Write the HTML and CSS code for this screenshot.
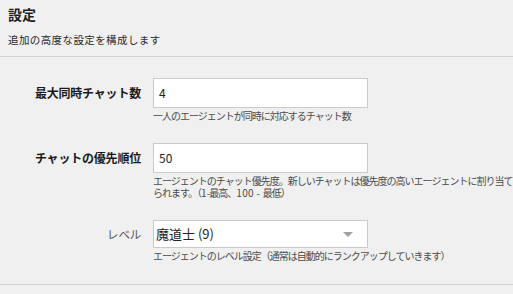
FILE: index.html
```html
<!DOCTYPE html>
<html lang="ja">
<head>
<meta charset="utf-8">
<link rel="stylesheet" href="styles.css">
</head>
<body>
<div class="header">
  <div class="title">設定</div>
  <div class="subtitle">追加の高度な設定を構成します</div>
</div>
<div class="form">
  <div class="row">
    <label class="label strong">最大同時チャット数</label>
    <div class="control"><div class="input">4</div></div>
    <div></div>
    <div class="hint">一人のエージェントが同時に対応するチャット数</div>
  </div>
  <div class="row">
    <label class="label strong">チャットの優先順位</label>
    <div class="control"><div class="input">50</div></div>
    <div></div>
    <div class="hint">エージェントのチャット優先度。新しいチャットは優先度の高いエージェントに割り当てられます。（<span class="num">1</span>-最高、<span class="num">100 - </span>最低）</div>
  </div>
  <div class="row">
    <label class="label light">レベル</label>
    <div class="control"><div class="select"><span>魔道士 (9)</span><span class="arrow"></span></div></div>
    <div></div>
    <div class="hint">エージェントのレベル設定（通常は自動的にランクアップしていきます）</div>
  </div>
</div>
</body>
</html>
```
FILE: styles.css
```css
html, body {
  margin: 0;
  padding: 0;
  background: #f0f0f0;
  font-family: "Noto Sans CJK JP", "Noto Sans", sans-serif;
  color: #222;
}
.header {
  padding: 6px 8px 0 8px;
  height: 50px;
  border-bottom: 1px solid #d2d2d2;
}
.title {
  font-size: 14px;
  font-weight: bold;
  line-height: 16px;
  color: #1e1e1e;
}
.subtitle {
  margin-top: 11px;
  font-size: 10.5px;
  line-height: 14px;
  color: #2a2a2a;
  letter-spacing: 0.4px;
}
.form {
  padding: 21px 0 22px 0;
  border-bottom: 1px solid #d2d2d2;
  display: flex;
  flex-direction: column;
  gap: 21px;
}
.row {
  display: grid;
  grid-template-columns: 141px 215px;
  column-gap: 12px;
  align-items: center;
}
.label {
  text-align: right;
  font-size: 12px;
  line-height: 16px;
  letter-spacing: -0.2px;
}
.label.strong {
  font-weight: bold;
  color: #1a1a1a;
}
.label.light {
  color: #555;
  font-size: 11.5px;
}
.input, .select {
  box-sizing: border-box;
  height: 30px;
  background: #fff;
  border: 1px solid #cacaca;
  padding: 0 5px;
  font-size: 12px;
  line-height: 28px;
  color: #222;
}
.select {
  height: 28px;
  line-height: 26px;
  padding: 0 14px 0 2px;
  font-size: 13px;
  display: flex;
  justify-content: space-between;
  align-items: center;
}
.arrow {
  width: 0;
  height: 0;
  border-left: 5px solid transparent;
  border-right: 5px solid transparent;
  border-top: 5px solid #a0a0a0;
}
.hint {
  grid-column: 2 / span 2;
  width: 360px;
  margin-top: 2px;
  font-size: 10px;
  line-height: 12px;
  letter-spacing: -1px;
  color: #4a4a4a;
}
.num {
  letter-spacing: 0.3px;
}
```
